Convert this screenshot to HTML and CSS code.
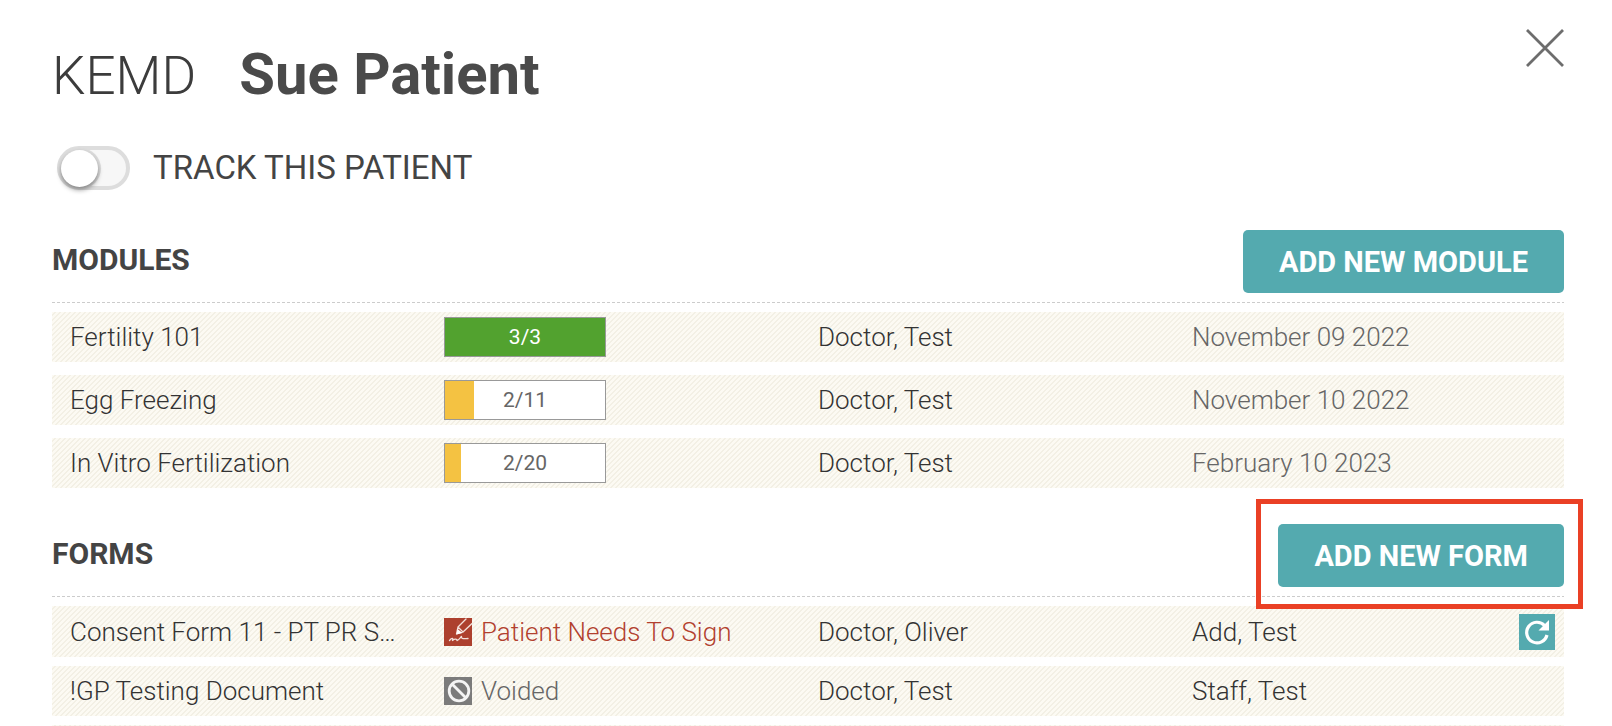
FILE: index.html
```html
<!DOCTYPE html>
<html lang="en">
<head>
<meta charset="utf-8">
<title>Sue Patient</title>
<link rel="stylesheet" href="styles.css">
</head>
<body>
<main class="panel">
  <header class="head">
    <h1 class="title"><span class="clinic">KEMD</span><span class="name">Sue Patient</span></h1>
    <button class="close" type="button" aria-label="Close">
      <svg viewBox="0 0 38 38" width="38" height="38"><path d="M1 1 37 37M37 1 1 37" fill="none" stroke="#6d6d6d" stroke-width="2.8"/></svg>
    </button>
  </header>

  <label class="track"><input class="switch" type="checkbox" role="switch"><span>TRACK THIS PATIENT</span></label>

  <section class="section first">
    <div class="bar">
      <h2 class="heading">MODULES</h2>
      <button class="add" type="button">ADD NEW MODULE</button>
    </div>
    <table class="list modules">
      <colgroup><col class="col"><col class="col"><col class="col"><col></colgroup>
      <tr><td>Fertility 101</td><td><div class="progress done"><span class="fill" style="width:100%"></span><span class="count">3/3</span></div></td><td>Doctor, Test</td><td class="muted">November 09 2022</td></tr>
      <tr><td>Egg Freezing</td><td><div class="progress"><span class="fill" style="width:18%"></span><span class="count">2/11</span></div></td><td>Doctor, Test</td><td class="muted">November 10 2022</td></tr>
      <tr><td>In Vitro Fertilization</td><td><div class="progress"><span class="fill" style="width:10%"></span><span class="count">2/20</span></div></td><td>Doctor, Test</td><td class="muted">February 10 2023</td></tr>
    </table>
  </section>

  <section class="section">
    <div class="bar">
      <h2 class="heading">FORMS</h2>
      <div class="marked"><button class="add" type="button">ADD NEW FORM</button></div>
    </div>
    <table class="list forms">
      <colgroup><col class="col"><col class="col"><col class="col"><col></colgroup>
      <tr class="pending">
        <td>Consent Form 11 - PT PR S…</td>
        <td><div class="status sign">
          <svg viewBox="0 0 28 28" width="28" height="28"><rect width="28" height="28" fill="#ad402e"/><g fill="none" stroke="#f3dfda" stroke-width="1.3" stroke-linejoin="round" stroke-linecap="round"><path d="M22 1 14 9 12.500 16 19 14 28 5.500M14 9 19 14"/><path d="M5.500 22.500C8 19.500 9.500 20 8.500 22.500 11 20.500 13 21 13 22.500 15 22 17 18.500 17.500 18.500 17 20.500 18 21 24 20.500"/></g><path d="M13.500 11 12.500 16.500 18.500 15Z" fill="#fff"/></svg>
          <span>Patient Needs To Sign</span></div></td>
        <td>Doctor, Oliver</td>
        <td><div class="last"><span>Add, Test</span>
          <button class="refresh" type="button" aria-label="Refresh"><svg viewBox="0 0 36 36" width="36" height="36"><path d="M25.500 11.500A10.300 10.300 0 1 0 28 21" fill="none" stroke="#fff" stroke-width="3.200"/><path d="M30 6V16.500H19.500Z" fill="#fff"/></svg></button></div></td>
      </tr>
      <tr>
        <td>!GP Testing Document</td>
        <td><div class="status void">
          <svg viewBox="0 0 28 28" width="28" height="28"><rect width="28" height="28" fill="#7b7b7b"/><g fill="none" stroke="#f4f4f4" stroke-width="2.800"><circle cx="15" cy="14" r="9.800"/><path d="M8 7 22 21"/></g></svg>
          <span>Voided</span></div></td>
        <td>Doctor, Test</td>
        <td>Staff, Test</td>
      </tr>
      <tr><td></td><td></td><td></td><td></td></tr>
    </table>
  </section>
</main>
</body>
</html>
```
FILE: styles.css
```css
* { box-sizing: border-box; }

html { overflow: hidden; }

body {
  margin: 0;
  background: #fff;
  color: #333;
  font-family: Roboto, "Open Sans", sans-serif;
  font-weight: 300;
}

h1, h2 { margin: 0; }

button {
  border: 0;
  padding: 0;
  background: none;
  font-family: inherit;
  cursor: pointer;
}

svg { display: block; flex: none; }

.panel { padding: 29px 48px 0 52px; }

.head {
  display: flex;
  justify-content: space-between;
  align-items: flex-start;
}

.title {
  display: flex;
  align-items: baseline;
  gap: 43px;
  padding-top: 13px;
  font-size: 58px;
  line-height: 64px;
  color: #4a4a4a;
}

.clinic { font-size: 53px; font-weight: 300; color: #3c3c3c; }
.name { font-weight: 700; }

.track {
  display: flex;
  align-items: center;
  gap: 23px;
  width: max-content;
  margin: 38px 0 0 5px;
  font-size: 33px;
  line-height: 44px;
  font-weight: 400;
  color: #444;
}

.switch {
  appearance: none;
  width: 73px;
  height: 44px;
  margin: 0;
  border: 4px solid #ddd;
  border-radius: 22px;
  background: #f7f7f7;
}

.switch::before {
  content: "";
  display: block;
  width: 37px;
  height: 37px;
  border-radius: 50%;
  background: #fff;
  box-shadow: 0 3px 5px rgba(0, 0, 0, .4), 1px 0 0 2px #ddd;
}

.section { margin-top: 36px; }
.first { margin-top: 40px; }

.bar {
  display: flex;
  justify-content: space-between;
  align-items: center;
  padding-bottom: 10px;
  background: repeating-linear-gradient(90deg, #ccc 0 3px, transparent 3px 5px) bottom / 100% 1px no-repeat;
}

.heading {
  padding-bottom: 4px;
  font-size: 30px;
  line-height: 36px;
  font-weight: 700;
  color: #444;
}

.add {
  height: 63px;
  padding: 0 36px;
  border-radius: 5px;
  background: #54aaaf;
  color: #fff;
  font-size: 29px;
  font-weight: 700;
}

.marked { position: relative; }

.marked::after {
  content: "";
  position: absolute;
  inset: -25px -19px -22px -22px;
  border: 5px solid #ea4025;
  pointer-events: none;
}

.list {
  width: 100%;
  table-layout: fixed;
  border-collapse: separate;
}

.col { width: 374px; }

.modules { border-spacing: 0 13px; margin: -4px 0 -13px; }
.forms { border-spacing: 0 9px; }

.list tr {
  height: 50px;
  background: linear-gradient(135deg, #fcfaf3 25%, #f3f0e5 25% 50%, #fcfaf3 50% 75%, #f3f0e5 75%) 0 0 / 5px 5px;
}

.list .pending { height: 51px; }

.list td {
  padding: 0 0 0 18px;
  font-size: 26px;
  line-height: 40px;
  white-space: nowrap;
}

.list .muted { color: #666; }

.progress {
  position: relative;
  width: 162px;
  height: 40px;
  border: 1px solid #999;
  background: #fff;
}

.fill {
  display: block;
  height: 100%;
  background: #f4c242;
}

.count {
  position: absolute;
  inset: 0;
  text-align: center;
  font-size: 21px;
  line-height: 38px;
  font-weight: 400;
  color: #666;
}

.done .fill { background: #52a22f; }
.done .count { color: #fff; }

.status {
  display: flex;
  align-items: center;
  gap: 9px;
}

.sign { color: #b2402e; }
.void { color: #666; }

.last {
  display: flex;
  justify-content: space-between;
  align-items: center;
  padding-right: 9px;
}

.refresh { background: #54aaaf; }
```
